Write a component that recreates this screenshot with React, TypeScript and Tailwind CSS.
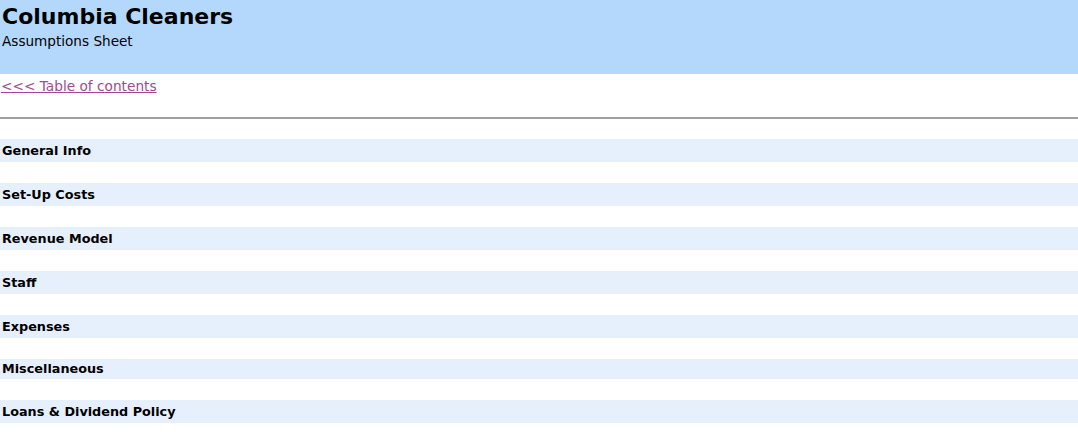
const SECTIONS = [
  { label: "General Info", h: "h-[23px]" },
  { label: "Set-Up Costs", h: "h-[23px]" },
  { label: "Revenue Model", h: "h-[23px]" },
  { label: "Staff", h: "h-[23px]" },
  { label: "Expenses", h: "h-[23px]" },
  { label: "Miscellaneous", h: "h-[20px]" },
  { label: "Loans & Dividend Policy", h: "h-[23px]" },
];

export default function App() {
  return (
    <div className="min-h-[448px] w-full bg-white font-['DejaVu_Sans',sans-serif] text-black">
      <header className="h-[74px] bg-[#b3d8fb] px-[2px] pt-[3px]">
        <h1 className="text-[22px] font-bold leading-[28px]">Columbia Cleaners</h1>
        <p className="text-[13.6px] leading-[20px]">Assumptions Sheet</p>
      </header>

      <div className="h-[43px] px-[1px]">
        <a href="#" className="text-[13.7px] leading-[20px] text-[#a14a8f] underline">
          &lt;&lt;&lt; Table of contents
        </a>
      </div>

      <hr className="border-t-[2px] border-[#a0a0a0]" />

      <div className="flex flex-col gap-[21px] pt-[20px]">
        {SECTIONS.map((s) => (
          <div
            key={s.label}
            className={`flex items-center bg-[#e6f0fc] px-[2px] ${s.h}`}
          >
            <span className="text-[12.8px] font-bold">{s.label}</span>
          </div>
        ))}
      </div>
    </div>
  );
}
